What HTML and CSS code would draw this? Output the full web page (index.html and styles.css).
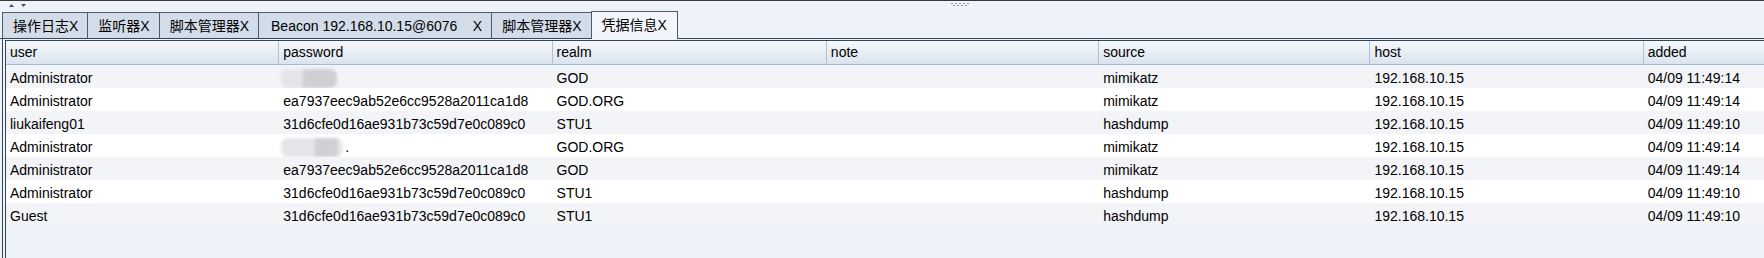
FILE: index.html
```html
<!DOCTYPE html>
<html lang="en">
<head>
  <meta charset="UTF-8" />
  <title>凭据信息</title>
  <link rel="stylesheet" href="styles.css">
</head>
<body>
  <div class="topbar">
    <svg class="arrows" width="20" height="8" viewBox="0 0 20 8">
      <path d="M0 5 L2.5 2 L5 5 Z" />
      <path d="M12 2 L17 2 L14.5 5 Z" />
    </svg>
    <svg class="grip" width="20" height="6" viewBox="0 0 20 6">
      <rect x="0" y="0" width="2" height="1" /><rect x="4" y="0" width="2" height="1" />
      <rect x="8" y="0" width="2" height="1" /><rect x="12" y="0" width="2" height="1" />
      <rect x="16" y="0" width="2" height="1" />
      <rect x="2" y="2" width="2" height="1" /><rect x="6" y="2" width="2" height="1" />
      <rect x="10" y="2" width="2" height="1" /><rect x="14" y="2" width="2" height="1" />
    </svg>
  </div>

  <div class="tabbar">
    <div class="tab">操作日志X</div>
    <div class="tab">监听器X</div>
    <div class="tab">脚本管理器X</div>
    <div class="tab beacon">Beacon 192.168.10.15@6076&nbsp;&nbsp;&nbsp;&nbsp;X</div>
    <div class="tab">脚本管理器X</div>
    <div class="tab active">凭据信息X</div>
  </div>

  <div class="pane">
    <div class="grid-wrap">
      <table class="grid">
        <colgroup>
          <col><col><col><col><col><col><col>
        </colgroup>
        <thead>
          <tr>
            <th>user</th>
            <th>password</th>
            <th>realm</th>
            <th>note</th>
            <th>source</th>
            <th>host</th>
            <th>added</th>
          </tr>
        </thead>
        <tbody>
          <tr>
            <td>Administrator</td>
            <td><span class="blur"></span></td>
            <td>GOD</td>
            <td></td>
            <td>mimikatz</td>
            <td>192.168.10.15</td>
            <td>04/09 11:49:14</td>
          </tr>
          <tr>
            <td>Administrator</td>
            <td>ea7937eec9ab52e6cc9528a2011ca1d8</td>
            <td>GOD.ORG</td>
            <td></td>
            <td>mimikatz</td>
            <td>192.168.10.15</td>
            <td>04/09 11:49:14</td>
          </tr>
          <tr>
            <td>liukaifeng01</td>
            <td>31d6cfe0d16ae931b73c59d7e0c089c0</td>
            <td>STU1</td>
            <td></td>
            <td>hashdump</td>
            <td>192.168.10.15</td>
            <td>04/09 11:49:10</td>
          </tr>
          <tr>
            <td>Administrator</td>
            <td><span class="blur wide"></span>.</td>
            <td>GOD.ORG</td>
            <td></td>
            <td>mimikatz</td>
            <td>192.168.10.15</td>
            <td>04/09 11:49:14</td>
          </tr>
          <tr>
            <td>Administrator</td>
            <td>ea7937eec9ab52e6cc9528a2011ca1d8</td>
            <td>GOD</td>
            <td></td>
            <td>mimikatz</td>
            <td>192.168.10.15</td>
            <td>04/09 11:49:14</td>
          </tr>
          <tr>
            <td>Administrator</td>
            <td>31d6cfe0d16ae931b73c59d7e0c089c0</td>
            <td>STU1</td>
            <td></td>
            <td>hashdump</td>
            <td>192.168.10.15</td>
            <td>04/09 11:49:10</td>
          </tr>
          <tr>
            <td>Guest</td>
            <td>31d6cfe0d16ae931b73c59d7e0c089c0</td>
            <td>STU1</td>
            <td></td>
            <td>hashdump</td>
            <td>192.168.10.15</td>
            <td>04/09 11:49:10</td>
          </tr>
        </tbody>
      </table>
    </div>
  </div>
</body>
</html>
```

FILE: styles.css
```css
html, body {
  height: 100%;
}
body {
  margin: 0;
  display: flex;
  flex-direction: column;
  overflow: hidden;
  background: #eef2f9;
  color: #000;
  font-family: "Liberation Sans", "Noto Sans CJK SC", Arial, sans-serif;
  font-size: 14px;
}
.topbar {
  display: flex;
  align-items: flex-start;
  height: 10px;
  border-top: 1px solid #3a3a3a;
}
.arrows {
  margin: 1px 0 0 9px;
  fill: #4a5058;
}
.grip {
  margin: 2px 0 0 922px;
  fill: #8c96a2;
}
.tabbar {
  display: flex;
  align-items: flex-start;
  height: 28px;
  box-sizing: border-box;
  padding-left: 2px;
  border-bottom: 1px solid #33465a;
}
.tab {
  box-sizing: border-box;
  height: 26px;
  margin-top: 1px;
  margin-right: -1px;
  padding: 2px 9px 0 10px;
  border: 1px solid #4b5c6e;
  border-bottom: none;
  background: #d3dde9;
  line-height: 23px;
  white-space: nowrap;
}
.tab.beacon {
  padding-left: 12px;
}
.tab.active {
  position: relative;
  height: 28px;
  margin-top: 0;
  margin-bottom: -1px;
  padding-right: 10px;
  background: #f2f5fa;
}
.pane {
  flex: 1;
  min-height: 0;
  margin-left: 2px;
  padding: 1px 0 0 2px;
  border-left: 1px solid #33465a;
}
.grid-wrap {
  height: 100%;
  overflow: hidden;
  border-left: 1px solid #33465a;
  border-top: 1px solid #33465a;
}
.grid {
  table-layout: fixed;
  width: 1911px;
  border-collapse: separate;
  border-spacing: 0;
}
.grid col {
  width: 273px;
}
.grid col:nth-child(3) {
  width: 274px;
}
.grid col:nth-child(4) {
  width: 272px;
}
.grid col:nth-child(5) {
  width: 271px;
}
.grid th {
  height: 23px;
  padding: 0 4px;
  font-weight: normal;
  text-align: left;
  line-height: 23px;
  background: linear-gradient(#f6f9fc, #dae3ed);
  border-right: 1px solid #a9c3de;
  border-bottom: 1px solid #a0bcda;
}
.grid td {
  height: 20px;
  padding: 3px 4px 0;
  line-height: 20px;
  white-space: nowrap;
  overflow: hidden;
}
.grid tbody tr:nth-child(odd) {
  background: #f3f4f7;
}
.grid tbody tr:nth-child(even) {
  background: #fff;
}
.blur {
  display: inline-block;
  vertical-align: -5px;
  width: 56px;
  height: 19px;
  margin-left: -2px;
  border-radius: 7px;
  background: linear-gradient(to right, #e4e5e8 0 40%, #cfd0d4 40% 100%);
  filter: blur(1.5px);
}
.blur.wide {
  width: 62px;
  margin-right: 2px;
  background: linear-gradient(to right, #e4e5e8 0 55%, #cfd0d4 55% 92%, #e6e7ea 92%);
}
```
